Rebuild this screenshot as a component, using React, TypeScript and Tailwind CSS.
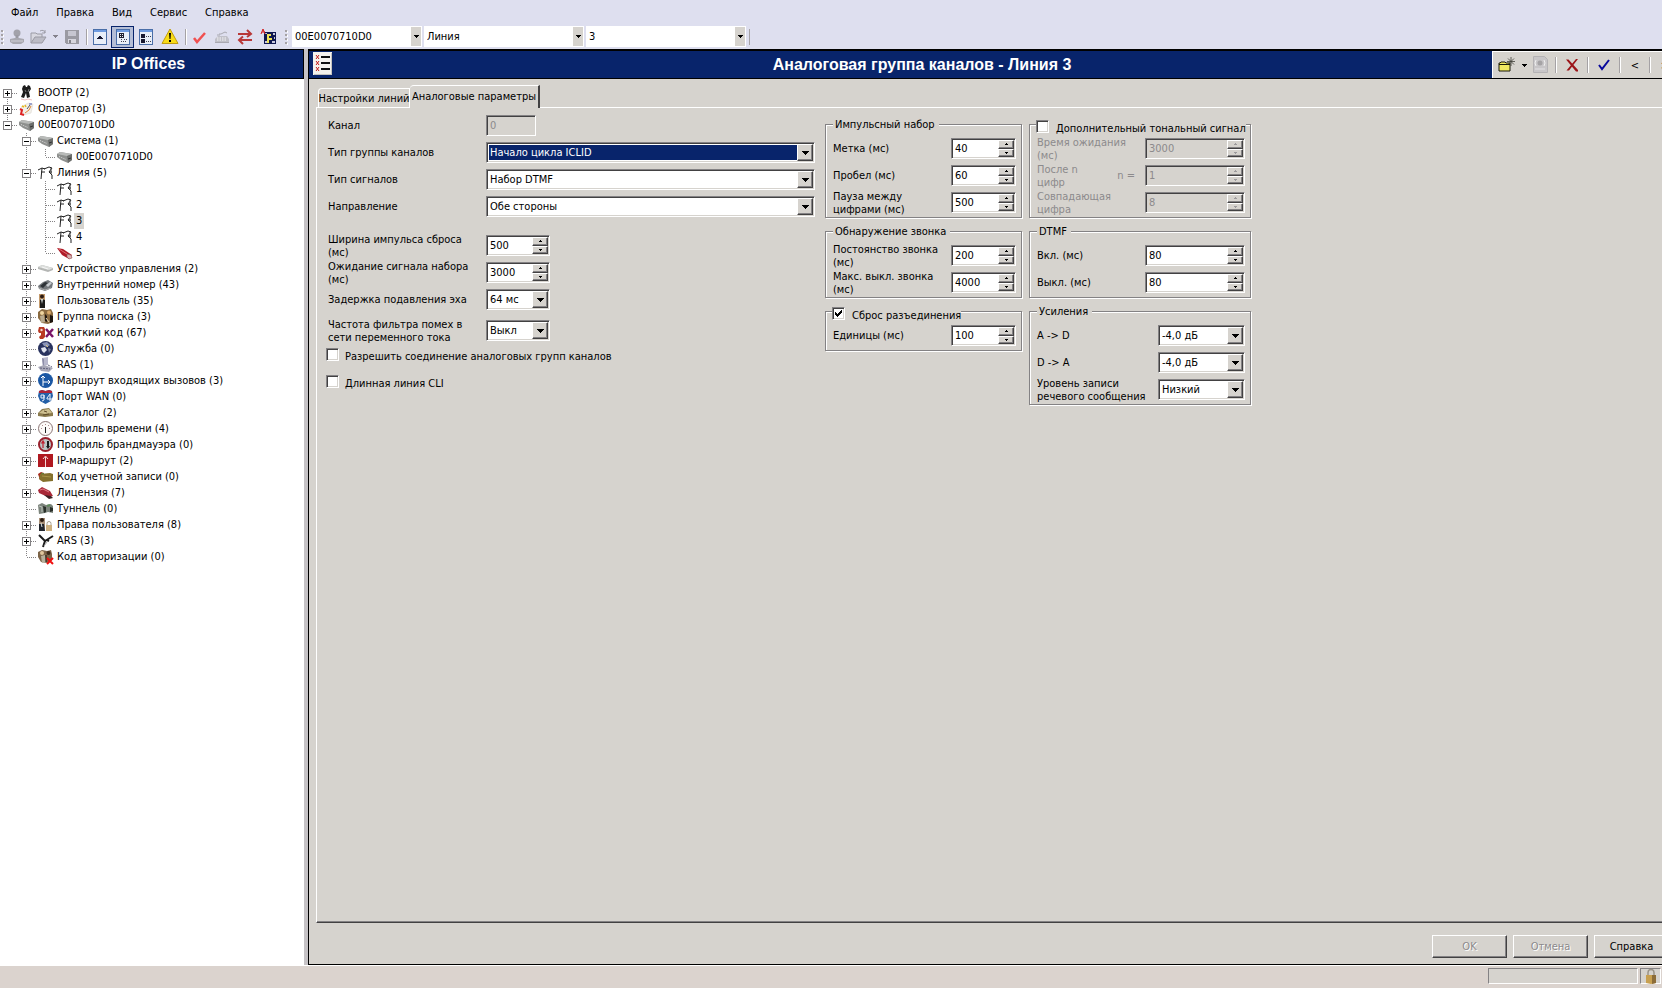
import React, { useId, useState } from 'react';

// ---------- types ----------
type TreeNode = {
    label: string;
    icon: string;
    children?: TreeNode[];
    closed?: boolean; // has children, but is not expanded
};

// ---------- tree data ----------
const TREE: TreeNode[] = [
    { label: 'BOOTP (2)', icon: 'bootp', closed: true },
    { label: 'Оператор (3)', icon: 'operator', closed: true },
    {
        label: '00E0070710D0',
        icon: 'unit',
        children: [
            { label: 'Система (1)', icon: 'unit', children: [{ label: '00E0070710D0', icon: 'unit' }] },
            {
                label: 'Линия (5)',
                icon: 'line',
                children: [
                    { label: '1', icon: 'line' },
                    { label: '2', icon: 'line' },
                    { label: '3', icon: 'line' },
                    { label: '4', icon: 'line' },
                    { label: '5', icon: 'plug' },
                ],
            },
            { label: 'Устройство управления (2)', icon: 'control', closed: true },
            { label: 'Внутренний номер (43)', icon: 'phone', closed: true },
            { label: 'Пользователь (35)', icon: 'user', closed: true },
            { label: 'Группа поиска (3)', icon: 'group', closed: true },
            { label: 'Краткий код (67)', icon: 'code', closed: true },
            { label: 'Служба (0)', icon: 'globe' },
            { label: 'RAS (1)', icon: 'ras', closed: true },
            { label: 'Маршрут входящих вызовов (3)', icon: 'route', closed: true },
            { label: 'Порт WAN (0)', icon: 'wan' },
            { label: 'Каталог (2)', icon: 'book', closed: true },
            { label: 'Профиль времени (4)', icon: 'clock', closed: true },
            { label: 'Профиль брандмауэра (0)', icon: 'firewall' },
            { label: 'IP-маршрут (2)', icon: 'iproute', closed: true },
            { label: 'Код учетной записи (0)', icon: 'account' },
            { label: 'Лицензия (7)', icon: 'license', closed: true },
            { label: 'Туннель (0)', icon: 'tunnel' },
            { label: 'Права пользователя (8)', icon: 'rights', closed: true },
            { label: 'ARS (3)', icon: 'ars', closed: true },
            { label: 'Код авторизации (0)', icon: 'auth' },
        ],
    },
];

// ---------- tree icons, 16x16 ----------
const ICONS: Record<string, React.ReactNode> = {
    bootp: (
        <>
            <path d="M4 1l2-1 1 2h1l1-2 2 1 1 3-2 3 1 5-3 1-1-5-2 5-3-1 2-5-1-3z" fill="#1c1c1c" />
            <path d="M6 5l1 2M10 4l-1 3" stroke="#777" />
            <path d="M2 14l4 1 3-1 4 1" stroke="#f0c4c4" fill="none" />
        </>
    ),
    operator: (
        <>
            <path d="M2 6l7-4 5 1-2 9-7 2z" fill="#f2f0ea" stroke="#d8d4cc" strokeWidth=".5" />
            <path d="M1 8l2 1-1 4 3 1" stroke="#d22" strokeWidth="2" fill="none" />
            <path d="M3 5l2 1M6 4l1 2" stroke="#e8b820" strokeWidth="1.5" />
            <path d="M8 8l3-4" stroke="#555" />
            <path d="M6 12l4-3 2-4" stroke="#e0873a" fill="none" />
            <path d="M10 3h3" stroke="#4a58b0" />
        </>
    ),
    unit: (
        <>
            <path d="M0 5l3-2 12 2v6l-4 3-7-3-4-3z" fill="#8e908e" />
            <path d="M0 5l3-2 12 2-5 2z" fill="#b9bbb9" />
            <path d="M10 7l5-2v6l-4 3z" fill="#6c6e6c" />
            <path d="M2 7.500l7 3" stroke="#dcdcdc" strokeDasharray="1 1" />
            <path d="M11 10l3-1" stroke="#333" />
        </>
    ),
    line: (
        <>
            <path d="M0 5l4-2 3 1M4 3l-1 11M3 7h4" stroke="#222" fill="none" />
            <path d="M6 4l5-2 3 1M14 3l-3 4 3 3v4M11 7h3" stroke="#222" fill="none" />
            <path d="M13 3v6" stroke="#444" />
        </>
    ),
    plug: (
        <>
            <path d="M0 3l6 1 9 6-3 4-7-4z" fill="#b01c28" />
            <path d="M2 4l8 5" stroke="#e06a70" />
            <path d="M10 9l4 1 1 3-3 1-2-2z" fill="#d9b0b0" stroke="#8c5050" strokeWidth=".6" />
        </>
    ),
    control: (
        <>
            <path d="M0 6l4-2 11 3v2l-5 2-10-3z" fill="#b4b6b4" />
            <path d="M0 6l4-2 11 3-4 2z" fill="#dcdedc" />
            <path d="M4 6l6 2" stroke="#f4f4f4" />
        </>
    ),
    phone: (
        <>
            <path d="M0 9l5-4 5-2 5 3-1 5-7 3-6-2z" fill="#74787c" />
            <path d="M2 9l5-4 3 1-5 5z" fill="#2e3236" />
            <path d="M8 8l4-3 2 1-4 4z" fill="#c8ccd0" />
            <path d="M1 11l6 2 6-2" stroke="#aaa" fill="none" />
        </>
    ),
    user: (
        <>
            <path d="M1 1h6v14H1z" fill="#c49a6c" />
            <circle cx="4" cy="3.500" r="2" fill="#2b1a10" />
            <path d="M2 7l2-1 3 1v8H2z" fill="#1c1c1c" />
            <path d="M3 6l1 5 1-5z" fill="#dfe8e8" />
        </>
    ),
    group: (
        <>
            <path d="M0 3l4-3 5 1 4-1 2 4v9l-5 2-6-1-4-5z" fill="#8a6a40" />
            <circle cx="4" cy="4" r="2" fill="#efd5a0" />
            <circle cx="11" cy="3.500" r="2" fill="#d8a868" />
            <path d="M2 7l4-1 1 7-4 1z" fill="#b9ab90" />
            <path d="M7 5l2 2v6l-2-1zM12 6l3 1v6l-3 1z" fill="#1d1510" />
            <path d="M8 9l3 4" stroke="#e8d8b8" />
        </>
    ),
    code: (
        <>
            <path d="M1 2h5l1 2v8l-2 2H2l-1-2 2-2V8H1L0 6z" fill="#b93a24" />
            <circle cx="3.500" cy="5" r="1.200" fill="#f5d6ce" />
            <path d="M8 4l7 8M15 4l-7 8" stroke="#7b1568" strokeWidth="2.500" />
        </>
    ),
    globe: (
        <>
            <circle cx="7.500" cy="7.500" r="7.500" fill="#28325e" />
            <path d="M4 2l5-1 3 3-3 2-3-1z" fill="#8a94b8" />
            <path d="M3 7l4-1 2 3-3 3-2-2z" fill="#dfe3ee" />
            <path d="M10 7l3 1-2 4z" fill="#76809c" />
            <path d="M8 4l2 2" stroke="#e0c87a" />
        </>
    ),
    ras: (
        <>
            <path d="M4 1l6-1v8l-5 1z" fill="#b8b8cc" />
            <path d="M4 1l2 1v7l-1 1z" fill="#8e8ea8" />
            <path d="M0 10l6-2 9 3-4 4-8-1z" fill="#a8a8b8" />
            <path d="M2 11l10 1M10 8l4 2" stroke="#60607a" strokeDasharray="2 1" />
        </>
    ),
    route: (
        <>
            <circle cx="7.500" cy="7.500" r="7.500" fill="#1c58a4" />
            <path d="M5 13V3M3 5l2-2 2 2M5 9h7M10 7l2 2-2 2" stroke="#fff" fill="none" />
        </>
    ),
    wan: (
        <>
            <path d="M1 2l3-1 3.500 1L11 1l3 1 1 5-2 5-5.500 3L2 12 0 7z" fill="#2460a8" />
            <path d="M1 2l3-1 3.500 1L11 1l3 1v2H1z" fill="#b02438" />
            <path d="M6 6H3v3h3V6v5l-2 1M12 12V5L9 9v1h5" stroke="#e8eef8" fill="none" />
        </>
    ),
    book: (
        <>
            <path d="M0 8l4-4 7-1 4 5v3l-8 1-7-1z" fill="#8a7a4c" />
            <path d="M1 8l4-3 6-1 3 4-7 1z" fill="#cdbf90" />
            <path d="M5 10l6-1M6 6l3 1" stroke="#5c4a28" />
        </>
    ),
    clock: (
        <>
            <circle cx="7.500" cy="7.500" r="7" fill="#fcfaf8" stroke="#8a7474" />
            <path d="M7.500 3v1M7.500 11v1M3 7.500h1M11 7.500h1M4 4l1 1M11 4l-1 1" stroke="#b09090" />
            <path d="M7.500 6v6" stroke="#222" />
        </>
    ),
    firewall: (
        <>
            <circle cx="7.500" cy="7.500" r="6.500" fill="#bcc4c4" stroke="#98202c" strokeWidth="2" />
            <path d="M5 11V5M3.500 6.500L5 4l1.500 2.500" stroke="#c02030" strokeWidth="1.200" fill="none" />
            <path d="M9 4h2v5h1l-2 3-2-3h1z" fill="#181818" />
        </>
    ),
    iproute: (
        <>
            <path d="M0 1h15v13H0z" fill="#b01820" />
            <path d="M7.500 14V4M5 6l2.500-3L10 6" stroke="#f2d8d8" fill="none" />
        </>
    ),
    account: (
        <>
            <path d="M0 5l3-2 3 1v8l-4-1z" fill="#a8281c" />
            <path d="M2 5l10-1 3 1v7l-10 1-4-3z" fill="#84702c" />
            <path d="M4 7l9 1" stroke="#a89448" />
            <path d="M3 4l3 1" stroke="#5a8a3c" />
        </>
    ),
    license: (
        <>
            <path d="M0 5l4-3 8 4 3 5-5 1-9-4z" fill="#a82838" />
            <path d="M2 5l3-1 6 3" stroke="#e07a84" fill="none" />
            <path d="M6 10l7 1 2 2-4 1z" fill="#3a2024" />
        </>
    ),
    tunnel: (
        <>
            <path d="M0 4l4-2 4 2 5-1 2 2v7l-5-1-3 1-6 1z" fill="#7c847c" />
            <path d="M5 5l3 1v5l-2 1zM12 6l3 1v3l-3 1z" fill="#2a302a" />
            <path d="M1 5l3 1v5" stroke="#bcc4bc" fill="none" />
            <path d="M9 5l3-1" stroke="#5f8a5c" strokeWidth="2" />
        </>
    ),
    rights: (
        <>
            <path d="M1 1h6v13H1z" fill="#a89078" />
            <circle cx="4" cy="3" r="2" fill="#2b1a10" />
            <path d="M1 7h5l1 7H1z" fill="#20242c" />
            <path d="M9 9V6.500a2 2 0 0 1 4 0V9" stroke="#a8a090" fill="none" />
            <path d="M8 8h6v6H8z" fill="#cdb080" />
            <path d="M3 6l1 4" stroke="#d8e0e0" />
        </>
    ),
    ars: (
        <>
            <path d="M1 2l6 6 8-5" stroke="#1b1b1b" strokeWidth="2" fill="none" />
            <path d="M7 8l-2 6M9 7l2 1" stroke="#1b1b1b" strokeWidth="2" />
            <path d="M9 9l-3 4" stroke="#aaa" />
        </>
    ),
    auth: (
        <>
            <path d="M0 3l4-2 5 1 4-1 1 4v6l-5 3-6-1-3-5z" fill="#7c6448" />
            <circle cx="4" cy="4" r="2" fill="#e0c69c" />
            <circle cx="10.500" cy="4" r="2" fill="#3a281a" />
            <path d="M3 7l4-1 1 7-4 1z" fill="#b8b09c" />
            <path d="M8 6v7" stroke="#1d1510" />
            <path d="M9 9l6 6M15 9l-6 6" stroke="#f01010" strokeWidth="2" />
        </>
    ),
};

const TreeIcon = ({ name }: { name: string }) => (
    <svg width="16" height="16" viewBox="0 0 16 16" className="shrink-0" aria-hidden="true">
        {ICONS[name]}
    </svg>
);

// one 19px guide column of a tree row
const Guide = ({ up, down, side }: { up?: boolean; down?: boolean; side?: boolean }) => (
    <svg width="19" height="16" viewBox="0 0 19 16" className="shrink-0" shapeRendering="crispEdges" aria-hidden="true">
        <g stroke="#848284" strokeDasharray="1 1" fill="none">
            {up && <path d="M7.500 0v8" />}
            {down && <path d="M7.500 8v8" />}
            {side && <path d="M8 8.500h10" />}
        </g>
    </svg>
);

const TreeRow = ({ node, guides, first, last }: { node: TreeNode; guides: boolean[]; first: boolean; last: boolean }) => {
    const [open, setOpen] = useState(!!node.children);
    const expandable = !!node.children || node.closed;
    const selected = node.label === '3';
    return (
        <li role="treeitem" aria-expanded={expandable ? open : undefined} aria-selected={selected}>
            <div className="flex h-4 items-center">
                {guides.map((g, i) => (
                    <Guide key={i} up={g} down={g} />
                ))}
                <div className="relative h-4 w-[19px]">
                    <Guide up={!(first && guides.length === 0)} down={!last} side />
                    {expandable && (
                        <button
                            type="button"
                            aria-label={node.label}
                            onClick={() => setOpen(!open)}
                            className="absolute left-[3px] top-1 size-[9px] border border-[#848284] bg-white"
                        >
                            <svg width="7" height="7" viewBox="0 0 7 7" shapeRendering="crispEdges">
                                <path d={open && node.children ? 'M1 3h5v1H1z' : 'M1 3h5v1H1zM3 1h1v5H3z'} />
                            </svg>
                        </button>
                    )}
                </div>
                <TreeIcon name={node.icon} />
                <span className={selected ? 'ml-px bg-[#d6d3ce] px-0.5 leading-4' : 'ml-px px-0.5 leading-4'}>{node.label}</span>
            </div>
            {open && node.children && (
                <ul role="group">
                    {node.children.map((c, i) => (
                        <TreeRow
                            key={c.label}
                            node={c}
                            guides={[...guides, !last]}
                            first={i === 0}
                            last={i === node.children!.length - 1}
                        />
                    ))}
                </ul>
            )}
        </li>
    );
};

// ---------- form controls ----------
const SUNKEN =
    'border border-t-[#848284] border-l-[#848284] border-r-white border-b-white p-px shadow-[inset_1px_1px_0_#424142,inset_-1px_-1px_0_#d6d3ce]';
const RAISED =
    'border border-t-white border-l-white border-r-[#424142] border-b-[#424142] bg-[#d6d3ce] shadow-[inset_-1px_-1px_0_#848284]';

const Label = ({ id, children, dim }: { id: string; children: React.ReactNode; dim?: boolean }) => (
    <label htmlFor={id} className={dim ? 'text-[#8c8a8c]' : ''}>
        {children}
    </label>
);

const Combo = ({ id, value, width, active }: { id: string; value: string; width: string; active?: boolean }) => (
    <div className={`relative flex h-[21px] shrink-0 bg-white ${SUNKEN} ${width}`}>
        <select
            id={id}
            className={`min-w-0 flex-1 appearance-none outline-none ${active ? 'mt-px mb-px ml-px mr-4 bg-[#08246b] pl-px text-white' : 'pl-0.5'}`}
        >
            <option>{value}</option>
        </select>
        <span className={`pointer-events-none absolute top-px right-px bottom-px flex w-4 items-center justify-center ${RAISED}`}>
            <svg width="7" height="4" viewBox="0 0 7 4" shapeRendering="crispEdges">
                <path d="M0 0h7v1H0zM1 1h5v1H1zM2 2h3v1H2zM3 3h1v1H3z" />
            </svg>
        </span>
    </div>
);

const Spin = ({ id, value, width, disabled }: { id: string; value: string; width: string; disabled?: boolean }) => {
    const [val, setVal] = useState(value);
    const step = (d: number) => setVal(String(Number(val) + d));
    return (
        <div className={`flex h-[21px] shrink-0 ${disabled ? 'bg-[#d6d3ce]' : 'bg-white'} ${SUNKEN} ${width}`}>
            <input
                id={id}
                type="text"
                value={val}
                disabled={disabled}
                onChange={(e) => setVal(e.target.value)}
                className="min-w-0 flex-1 pl-0.5 outline-none disabled:text-[#8c8a8c]"
            />
            <div className="flex w-4 flex-col bg-[#d6d3ce]">
                {[1, -1].map((d) => (
                    <button
                        key={d}
                        type="button"
                        disabled={disabled}
                        aria-label={d > 0 ? '+' : '-'}
                        onClick={() => step(d)}
                        className={`flex min-h-0 flex-1 items-center justify-center text-black disabled:text-[#9c9a9c] ${RAISED}`}
                    >
                        <svg width="3" height="2" viewBox="0 0 3 2" fill="currentColor" shapeRendering="crispEdges">
                            <path d={d > 0 ? 'M1 0h1v1H1zM0 1h3v1H0z' : 'M0 0h3v1H0zM1 1h1v1H1z'} />
                        </svg>
                    </button>
                ))}
            </div>
        </div>
    );
};

const Check = ({ id, checked }: { id: string; checked?: boolean }) => (
    <span className="relative flex size-[13px] shrink-0">
        <input id={id} type="checkbox" defaultChecked={checked} className={`peer size-full appearance-none bg-white ${SUNKEN}`} />
        <svg
            width="7"
            height="7"
            viewBox="0 0 7 7"
            shapeRendering="crispEdges"
            className="pointer-events-none absolute top-[3px] left-[3px] hidden peer-checked:block"
        >
            <path d="M0 2h1v3H0zM1 3h1v3H1zM2 4h1v3H2zM3 3h1v3H3zM4 2h1v3H4zM5 1h1v3H5zM6 0h1v3H6z" />
        </svg>
    </span>
);

// row: label on the left, control on the right
const Row = ({ label, dim, mid, children }: { label: React.ReactNode; dim?: boolean; mid?: string; children: (id: string) => React.ReactNode }) => {
    const id = useId();
    return (
        <div className="flex h-[21px] items-center justify-between">
            <Label id={id} dim={dim}>
                {label}
            </Label>
            {mid && <span className="mr-2.5 ml-auto text-[#8c8a8c]">{mid}</span>}
            {children(id)}
        </div>
    );
};

const Group = ({ title, check, checked, children }: { title: string; check?: boolean; checked?: boolean; children: React.ReactNode }) => {
    const id = useId();
    return (
        <fieldset className="min-w-0 border border-[#848284] pt-2 pr-[5px] pb-1 pl-[7px] shadow-[1px_1px_0_#fff,inset_1px_1px_0_#fff]">
            {check ? (
                <legend className="-ml-px flex h-3 items-start bg-[#d6d3ce]">
                    <span className="flex items-start gap-[7px] pt-0.5">
                        <Check id={id} checked={checked} />
                        <label htmlFor={id} className="pt-0.5 whitespace-nowrap">
                            {title}
                        </label>
                    </span>
                </legend>
            ) : (
                <legend className="flex h-3 items-center bg-[#d6d3ce] pr-1 pl-0.5">{title}</legend>
            )}
            <div className="flex flex-col gap-1.5">{children}</div>
        </fieldset>
    );
};

// left column row, controls start on a common edge
const FormRow = ({ label, children }: { label: React.ReactNode; children: (id: string) => React.ReactNode }) => {
    const id = useId();
    return (
        <div className="flex h-[21px] items-center">
            <div className="w-[158px] shrink-0">
                <Label id={id}>{label}</Label>
            </div>
            {children(id)}
        </div>
    );
};

const CheckRow = ({ label }: { label: string }) => {
    const id = useId();
    return (
        <div className="-ml-0.5 flex items-start gap-1.5">
            <Check id={id} />
            <label htmlFor={id} className="pt-0.5">
                {label}
            </label>
        </div>
    );
};

// ---------- toolbar ----------
const ToolButton = ({ name, width, children, active }: { name: string; width: string; children: React.ReactNode; active?: boolean }) => (
    <button
        type="button"
        aria-label={name}
        className={`flex h-[22px] shrink-0 items-center justify-center ${width} ${active ? 'border border-[#08246b] bg-[#b5bed6]' : ''}`}
    >
        {children}
    </button>
);

const Separator = () => <span className="h-4 w-0.5 shrink-0 border-l border-[#a5a2a5] border-r border-r-white" />;

const Grip = () => (
    <svg width="3" height="16" viewBox="0 0 3 16" className="shrink-0" shapeRendering="crispEdges" aria-hidden="true">
        <path d="M0 1h2v2H0zM0 5h2v2H0zM0 9h2v2H0zM0 13h2v2H0z" fill="#a5a2a5" />
        <path d="M2 2h1v2H2zM2 6h1v2H2zM2 10h1v2H2zM2 14h1v2H2z" fill="#fff" />
    </svg>
);

const SmallArrow = ({ color }: { color: string }) => (
    <svg width="5" height="3" viewBox="0 0 5 3" className="shrink-0" fill={color} shapeRendering="crispEdges" aria-hidden="true">
        <path d="M0 0h5v1H0zM1 1h3v1H1zM2 2h1v1H2z" />
    </svg>
);

const BarCombo = ({ name, value, width }: { name: string; value: string; width: string }) => (
    <div className={`relative flex h-[21px] shrink-0 border border-white bg-white ${width}`}>
        <select aria-label={name} className="min-w-0 flex-1 appearance-none pl-0.5 outline-none">
            <option>{value}</option>
        </select>
        <span className="pointer-events-none absolute top-0 right-0 bottom-0 flex w-2.5 items-center justify-center bg-[#d6d3ce]">
            <SmallArrow color="#000" />
        </span>
    </div>
);

const PanelIcon = ({ children }: { children: React.ReactNode }) => (
    <svg width="14" height="16" viewBox="0 0 14 16" shapeRendering="crispEdges">
        <path d="M0 0h14v16H0z" fill="#4a6ea8" />
        <path d="M1 3h12v12H1z" fill="#e8eef8" />
        <path d="M1 1h12v2H1z" fill="#6f9be0" />
        {children}
    </svg>
);

const MainToolbar = () => (
    <div className="flex h-[23px] items-center pl-px">
        <Grip />
        <ToolButton name="Подключить" width="ml-1 w-[18px]">
            <svg width="16" height="16" viewBox="0 0 16 16">
                <circle cx="8" cy="4" r="3.500" fill="#a2a2aa" />
                <path d="M6.500 6h3v5h-3z" fill="#9a9aa2" />
                <path d="M1 10l5-1h4l5 1v3l-3 2H4l-3-2z" fill="#a8a8b0" />
                <path d="M2 12h12" stroke="#d0d0d8" />
            </svg>
        </ToolButton>
        <ToolButton name="Открыть" width="ml-1 w-[18px]">
            <svg width="18" height="16" viewBox="0 0 18 16">
                <path d="M1 14V4h5l1 1h5v3" fill="#d8d8e0" stroke="#9a9aa4" />
                <path d="M1 14l4-6h11l-4 6z" fill="#bcbcc6" stroke="#9a9aa4" />
                <path d="M10 2q4-2 5 2M15 1v3h-3" stroke="#9a9aa4" fill="none" />
            </svg>
        </ToolButton>
        <span className="ml-[5px] flex">
            <SmallArrow color="#84828c" />
        </span>
        <ToolButton name="Сохранить" width="ml-[5px] w-[18px]">
            <svg width="14" height="14" viewBox="0 0 14 14" shapeRendering="crispEdges">
                <path d="M0 0h14v14H1L0 13z" fill="#9a9aa2" />
                <path d="M3 1h8v5H3z" fill="#c6c6d0" />
                <path d="M3 9h8v4H3z" fill="#d6d6de" />
                <path d="M4 10h2v3H4z" fill="#84848c" />
            </svg>
        </ToolButton>
        <span className="mr-[3px] ml-[5px] flex">
            <Separator />
        </span>
        <ToolButton name="Группы" width="w-[18px]">
            <PanelIcon>
                <path d="M6 7h2v1H6zM5 8h4v1H5zM4 9h6v1H4z" fill="#181830" />
            </PanelIcon>
        </ToolButton>
        <ToolButton name="Дерево" width="ml-0.5 w-[23px]" active>
            <PanelIcon>
                <path d="M3 4h5v1H3zM3 8h5v1H3zM3 4h1v5H3zM7 4h1v5H7zM5 5h1v3H5zM4 6h3v1H4z" fill="#202030" />
                <path d="M5 10h1v1H5zM5 12h1v1H5zM7 12h1v1H7zM9 12h1v1H9zM8 10h1v1H8zM10 10h1v1h-1z" fill="#404050" />
            </PanelIcon>
        </ToolButton>
        <ToolButton name="Список" width="ml-[3px] w-[18px]">
            <PanelIcon>
                <path d="M2 5h4v4H2zM2 10h4v4H2z" fill="#181830" />
                <path d="M7 7h1v1H7zM9 7h1v1H9zM11 7h1v1h-1zM7 12h1v1H7zM9 12h1v1H9zM11 12h1v1h-1z" fill="#404050" />
            </PanelIcon>
        </ToolButton>
        <ToolButton name="Ошибки" width="ml-1.5 w-[18px]">
            <svg width="18" height="17" viewBox="0 0 18 17">
                <path d="M9 1l8 14.500H1z" fill="#f8dc18" stroke="#c09c10" strokeLinejoin="round" />
                <path d="M8 5h2l-.500 6h-1z" />
                <path d="M8 12h2v2H8z" />
            </svg>
        </ToolButton>
        <span className="mr-1 ml-1.5 flex">
            <Separator />
        </span>
        <ToolButton name="Проверить" width="w-[18px]">
            <svg width="16" height="16" viewBox="0 0 16 16">
                <path d="M2 9l3 4 8-9" stroke="#f05050" strokeWidth="2.500" fill="none" />
            </svg>
        </ToolButton>
        <ToolButton name="Телефон" width="ml-1 w-[18px]">
            <svg width="16" height="14" viewBox="0 0 16 14">
                <path d="M1 9l3-3h9l2 3v3H1z" fill="#c0c0c8" />
                <path d="M3 8h9M3 10h9" stroke="#f6f6f8" strokeDasharray="1.500 1" />
                <path d="M5 4h2l4-2 2 1M3 5h3M1 12.500h14" stroke="#a8a8b0" fill="none" />
            </svg>
        </ToolButton>
        <ToolButton name="Обмен" width="ml-1 w-[20px]">
            <svg width="18" height="16" viewBox="0 0 18 16">
                <path d="M2 5h13M11 1l4 4-4 3M16 11H3M7 7.500L3 11l4 4" stroke="#b83838" strokeWidth="2" fill="none" />
            </svg>
        </ToolButton>
        <ToolButton name="Мастер" width="ml-1 w-[18px]">
            <svg width="17" height="17" viewBox="0 0 17 17">
                <path d="M4 4h12v12H4z" fill="#101850" />
                <path d="M5 5h2v1H5zM13 5h2v2h-2zM14 9h1v2h-1zM5 13h2v2H5zM12 13h3v2h-3z" fill="#c8c8dc" />
                <path d="M7 6h4v2H9v2h3v2H9v3H7z" fill="#f0e458" />
                <path d="M1 6l2-5 2 5M2 4h3" stroke="#d01818" fill="none" />
            </svg>
        </ToolButton>
        <span className="mr-1 ml-2 flex">
            <Grip />
        </span>
        <div className="flex gap-0.5">
            <BarCombo name="Система" value="00E0070710D0" width="w-[130px]" />
            <BarCombo name="Тип" value="Линия" width="w-[160px]" />
            <BarCombo name="Запись" value="3" width="w-[160px]" />
        </div>
        <span className="ml-[3px] h-4 w-px bg-[#a5a2a5]" />
    </div>
);

// ---------- title bar tools of the right panel ----------
const RecordTools = () => (
    <div className="-mr-3 flex w-[182px] shrink-0 items-center border-t border-l border-white bg-[#d6d3ce] pl-1">
        <ToolButton name="Создать" width="w-[18px]">
            <svg width="17" height="16" viewBox="0 0 17 16">
                <path d="M1 14V6h1l1-1h4l1 1h4v8z" fill="#f0e860" stroke="#181808" />
                <path d="M1 7.500h11" stroke="#181808" />
                <path d="M13 0v9M9 4.500h8M10 1.500l6 6M16 1.500l-6 6" stroke="#404038" strokeWidth=".8" />
            </svg>
        </ToolButton>
        <span className="mr-1 ml-[7px] flex">
            <SmallArrow color="#000" />
        </span>
        <ToolButton name="Экспорт" width="w-[18px]">
            <svg width="15" height="18" viewBox="0 0 15 18">
                <path d="M.500.500h11l3 3v13H.500z" fill="#c8c6c8" stroke="#b4b2b4" />
                <circle cx="7" cy="7" r="2.500" fill="#a5a3a5" />
                <path d="M3 4q-2 3 0 6M11 4q2 3 0 6" stroke="#f0f0f0" fill="none" />
                <path d="M2 13h10" stroke="#e4e2e4" />
            </svg>
        </ToolButton>
        <span className="mx-1.5 flex">
            <Separator />
        </span>
        <ToolButton name="Удалить" width="w-[18px]">
            <svg width="14" height="14" viewBox="0 0 14 14">
                <path d="M1 1.500h2.500L13 12v1.500h-2zM11 1h2L4 12.500H1.500z" fill="#9c1418" />
            </svg>
        </ToolButton>
        <span className="mx-1.5 flex">
            <Separator />
        </span>
        <ToolButton name="Применить" width="w-[18px]">
            <svg width="12" height="12" viewBox="0 0 12 12">
                <path d="M1 6l3 4 7-9" stroke="#08089c" strokeWidth="2" fill="none" />
            </svg>
        </ToolButton>
        <span className="mx-1.5 flex">
            <Separator />
        </span>
        <button type="button" className="w-4 shrink-0">
            &lt;
        </button>
        <span className="mx-1.5 flex">
            <Separator />
        </span>
        <button type="button" className="w-4 shrink-0">
            &gt;
        </button>
    </div>
);

const FormIcon = () => (
    <svg width="19" height="23" viewBox="0 0 19 23" className="mx-1 my-px shrink-0" shapeRendering="crispEdges" aria-hidden="true">
        <path d="M0 0h19v23H0z" fill="#f4f2ee" />
        <path d="M18 1h1v22H1v-1h17z" fill="#c6c3be" />
        {[3, 9, 15].map((y) => (
            <g key={y}>
                <path d={`M3 ${y}l3 4M6 ${y}l-3 4`} stroke="#c01818" shapeRendering="auto" />
                <path d={`M8 ${y + 2}h9`} stroke="#101010" strokeWidth="2" />
            </g>
        ))}
    </svg>
);

const Title = ({ children }: { children: React.ReactNode }) => (
    <h2 className="flex-1 text-center font-['Liberation_Sans',Arial,sans-serif] text-base leading-6 font-bold text-white">{children}</h2>
);

const FOOT_BUTTON = `h-[23px] w-[75px] shrink-0 disabled:text-[#8c8a8c] disabled:[text-shadow:1px_1px_0_#fff] ${RAISED}`;

// ---------- "Аналоговые параметры" ----------
const AnalogForm = () => (
    <div className="flex items-start gap-[11px] pt-[7px] pl-[11px]">
        <div className="flex w-[486px] shrink-0 flex-col gap-1.5">
            <FormRow label="Канал">
                {(id) => (
                    <div className={`flex h-[21px] w-[50px] ${SUNKEN}`}>
                        <input id={id} type="text" defaultValue="0" disabled className="w-full pl-0.5 text-[#8c8a8c]" />
                    </div>
                )}
            </FormRow>
            <FormRow label="Тип группы каналов">{(id) => <Combo id={id} value="Начало цикла ICLID" width="w-[329px]" active />}</FormRow>
            <FormRow label="Тип сигналов">{(id) => <Combo id={id} value="Набор DTMF" width="w-[329px]" />}</FormRow>
            <FormRow label="Направление">{(id) => <Combo id={id} value="Обе стороны" width="w-[329px]" />}</FormRow>
            <div className="mt-3 flex flex-col gap-1.5">
                <FormRow label={<>Ширина импульса сброса<br />(мс)</>}>{(id) => <Spin id={id} value="500" width="w-16" />}</FormRow>
                <FormRow label={<>Ожидание сигнала набора<br />(мс)</>}>{(id) => <Spin id={id} value="3000" width="w-16" />}</FormRow>
                <FormRow label="Задержка подавления эха">{(id) => <Combo id={id} value="64 мс" width="w-16" />}</FormRow>
            </div>
            <div className="mt-1">
                <FormRow label={<>Частота фильтра помех в<br />сети переменного тока</>}>{(id) => <Combo id={id} value="Выкл" width="w-16" />}</FormRow>
            </div>
            <div className="flex flex-col gap-3 pt-px">
                <CheckRow label="Разрешить соединение аналоговых групп каналов" />
                <CheckRow label="Длинная линия CLI" />
            </div>
        </div>
        <div className="mt-[3px] flex w-[197px] shrink-0 flex-col gap-[7px]">
            <Group title="Импульсный набор">
                <Row label="Метка (мс)">{(id) => <Spin id={id} value="40" width="w-[65px]" />}</Row>
                <Row label="Пробел (мс)">{(id) => <Spin id={id} value="60" width="w-[65px]" />}</Row>
                <Row label={<>Пауза между<br />цифрами (мс)</>}>{(id) => <Spin id={id} value="500" width="w-[65px]" />}</Row>
            </Group>
            <Group title="Обнаружение звонка">
                <Row label={<>Постоянство звонка<br />(мс)</>}>{(id) => <Spin id={id} value="200" width="w-[65px]" />}</Row>
                <Row label={<>Макс. выкл. звонка<br />(мс)</>}>{(id) => <Spin id={id} value="4000" width="w-[65px]" />}</Row>
            </Group>
            <Group title="Сброс разъединения" check checked>
                <Row label="Единицы (мс)">{(id) => <Spin id={id} value="100" width="w-[65px]" />}</Row>
            </Group>
        </div>
        <div className="mt-[3px] -ml-1 flex w-[222px] shrink-0 flex-col gap-[7px]">
            <Group title="Дополнительный тональный сигнал" check>
                <Row dim label={<>Время ожидания<br />(мс)</>}>{(id) => <Spin id={id} value="3000" width="w-[100px]" disabled />}</Row>
                <Row dim mid="n =" label={<>После n<br />цифр</>}>{(id) => <Spin id={id} value="1" width="w-[100px]" disabled />}</Row>
                <Row dim label={<>Совпадающая<br />цифра</>}>{(id) => <Spin id={id} value="8" width="w-[100px]" disabled />}</Row>
            </Group>
            <Group title="DTMF">
                <Row label="Вкл. (мс)">{(id) => <Spin id={id} value="80" width="w-[100px]" />}</Row>
                <Row label="Выкл. (мс)">{(id) => <Spin id={id} value="80" width="w-[100px]" />}</Row>
            </Group>
            <Group title="Усиления">
                <Row label="A -> D">{(id) => <Combo id={id} value="-4,0 дБ" width="w-[87px]" />}</Row>
                <Row label="D -> A">{(id) => <Combo id={id} value="-4,0 дБ" width="w-[87px]" />}</Row>
                <Row label={<>Уровень записи<br />речевого сообщения</>}>{(id) => <Combo id={id} value="Низкий" width="w-[87px]" />}</Row>
            </Group>
        </div>
    </div>
);

const App: React.FC = () => {
    return (
        <div className="flex h-screen flex-col overflow-hidden bg-[#dedfef] font-['DejaVu_Sans_Condensed',Tahoma,sans-serif] text-[11px] leading-[13px] text-black">
            {/* menu */}
            <nav className="flex h-[25px] items-center gap-[18px] pl-[11px]">
                {['Файл', 'Правка', 'Вид', 'Сервис', 'Справка'].map((m) => (
                    <button key={m} type="button">
                        {m}
                    </button>
                ))}
            </nav>
            <MainToolbar />

            <div className="mt-px flex min-h-0 flex-1">
                {/* tree */}
                <aside className="flex w-[304px] shrink-0 flex-col bg-white">
                    <div className="flex h-[30px] items-center border border-l-0 border-black bg-[#08246b] pr-1.5">
                        <Title>IP Offices</Title>
                    </div>
                    <ul role="tree" className="pt-1.5">
                        {TREE.map((n, i) => (
                            <TreeRow key={n.label} node={n} guides={[]} first={i === 0} last={i === TREE.length - 1} />
                        ))}
                    </ul>
                </aside>
                <div className="w-1 shrink-0 bg-[#c6c3c6]" />

                {/* record */}
                <main className="flex min-w-0 flex-1 flex-col overflow-hidden border-t-2 border-b border-l border-black bg-[#d6d3ce]">
                    <div className="flex h-7 shrink-0 border-b border-black bg-[#08246b]">
                        <FormIcon />
                        <div className="flex flex-1 items-center pl-4">
                            <Title>Аналоговая группа каналов - Линия 3</Title>
                        </div>
                        <RecordTools />
                    </div>
                    <div className="-mr-2 flex flex-1 flex-col pt-1.5 pr-px pl-[7px]">
                        <div role="tablist" className="flex items-end pl-0.5">
                            <button
                                type="button"
                                role="tab"
                                aria-selected="false"
                                className="flex h-[19px] w-[92px] items-center justify-center rounded-tl-sm border-t border-r border-l border-white whitespace-nowrap"
                            >
                                Настройки линий
                            </button>
                            <button
                                type="button"
                                role="tab"
                                aria-selected="true"
                                className="z-10 -mb-px h-[23px] w-[130px] rounded-tl-sm border-t border-r-2 border-white border-r-[#424142] bg-[#d6d3ce] pb-0.5 whitespace-nowrap"
                            >
                                Аналоговые параметры
                            </button>
                        </div>
                        <div
                            role="tabpanel"
                            className="flex-1 border-t border-b border-l border-white border-b-[#424142] shadow-[inset_0_-1px_0_#848284]"
                        >
                            <AnalogForm />
                        </div>
                        <div className="flex shrink-0 justify-end gap-1.5 pt-3 pb-1.5">
                            <button type="button" disabled className={FOOT_BUTTON}>
                                OK
                            </button>
                            <button type="button" disabled className={FOOT_BUTTON}>
                                Отмена
                            </button>
                            <button type="button" className={FOOT_BUTTON}>
                                Справка
                            </button>
                        </div>
                    </div>
                </main>
            </div>

            {/* status bar */}
            <footer className="flex h-[23px] shrink-0 items-start justify-end gap-0.5 border-t border-white bg-[#dbd3ce] pt-0.5 pr-px">
                <div className="h-4 w-[150px] border border-[#848284] border-r-white border-b-white bg-[#d6d3ce]" />
                <div className="flex h-4 w-[21px] justify-center border border-[#848284] border-r-white border-b-white bg-[#d6d3ce]">
                    <svg width="12" height="15" viewBox="0 0 12 15" aria-hidden="true">
                        <path d="M3 7V3.500a3 3 0 0 1 6 0V7" stroke="#9a9488" strokeWidth="1.500" fill="none" />
                        <path d="M1 6h10v8l-5 1-5-1z" fill="#c8a050" />
                        <path d="M7 6h4v8l-4 1z" fill="#8c6c38" />
                    </svg>
                </div>
            </footer>
        </div>
    );
};

export default App;
